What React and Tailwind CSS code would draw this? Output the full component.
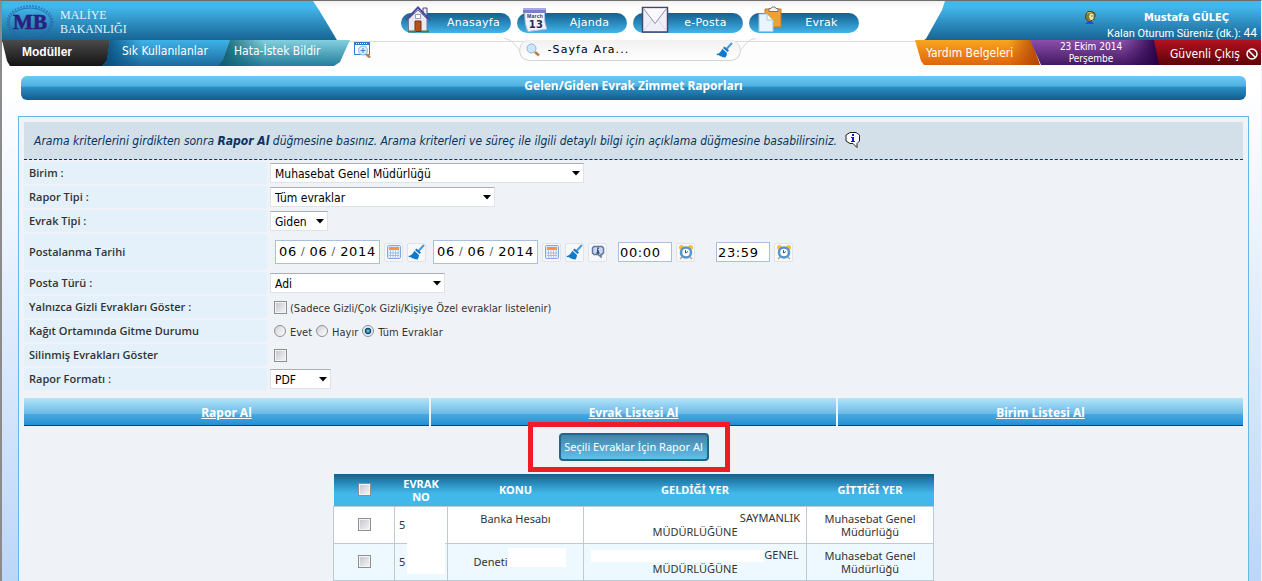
import clsx from 'clsx';

const menuItems = [
  { label: 'Anasayfa', icon: <HomeIcon /> },
  { label: 'Ajanda', icon: <AgendaIcon /> },
  { label: 'e-Posta', icon: <MailIcon /> },
  { label: 'Evrak', icon: <ClipboardIcon /> },
];

const actions = ['Rapor Al', 'Evrak Listesi Al', 'Birim Listesi Al'];

const tahoma = "font-['DejaVu_Sans_Condensed','DejaVu_Sans',sans-serif]";
const noto = "font-['Noto_Sans',sans-serif]";
const openSans = "font-['Open_Sans',sans-serif]";
const verdana = "font-['DejaVu_Sans',sans-serif]";

export default function App() {
  return (
    <div className={clsx('min-h-screen border-t border-r border-l-2 border-[#6f6c6c] border-r-[#f0f2f5] border-l-[#8b8b8b] bg-linear-to-b from-white from-15% to-[#bcd6f8] text-[#333]', noto)}>
      <Header />
      <SubHeader />
      <main className="ml-4 mr-3">
        <h1 className="mx-[3px] mt-2 flex h-6 items-start justify-center rounded-md bg-[linear-gradient(#6cc9f3,#4fb0e0_42%,#2a90c6_46%,#125c8c)] pt-0.5 text-xs leading-4 font-bold text-white">
          Gelen/Giden Evrak Zimmet Raporları
        </h1>
        <section className="mt-4 border border-[#62b8ea] bg-[#eff3f8] p-[5px] pb-0">
          <p className={clsx('mb-0.5 flex h-[38px] items-center gap-2 border-b border-dashed border-[#0a3460] bg-[#d4e0e9] px-2.5 text-xs text-[#083363]', tahoma)}>
            <em>
              Arama kriterlerini girdikten sonra <b>Rapor Al</b> düğmesine basınız. Arama kriterleri ve süreç ile ilgili detaylı bilgi için açıklama düğmesine basabilirsiniz.
            </em>
            <button type="button" aria-label="Açıklama"><InfoBubble /></button>
          </p>
          <ReportForm />
          <div className="mt-2 grid grid-cols-3 gap-0.5">
            {actions.map((action) => (
              <a key={action} href="#" className="flex h-7 items-center justify-center border-b border-[#0f4468] bg-[linear-gradient(#b4e5fa,#6bb9e6_58%,#4aa8df_60%,#2390d2)] pt-0.5 text-xs font-bold text-white underline">
                {action}
              </a>
            ))}
          </div>
          <div className="relative flex justify-center pt-[7px] pb-[13px]">
            <div className="absolute -top-1 left-1/2 -ml-[106px] h-[50px] w-[202px] border-[5px] border-[#ee1c24]" />
            <button type="button" className="relative flex h-7 w-[150px] items-center justify-center rounded-sm border-2 border-[#24658a] bg-linear-to-b from-[#4484a9] to-[#62bfea] text-[11px] whitespace-nowrap text-white">
              Seçili Evraklar İçin Rapor Al
            </button>
          </div>
          <Documents />
        </section>
      </main>
    </div>
  );
}

function Header() {
  return (
    <header className="grid h-[38px] grid-cols-[336px_1fr_340px] bg-linear-to-b from-[#f1f1f1] to-white to-20%">
      <div className="flex items-center gap-1.5 bg-linear-to-b from-[#43b6ea] from-15% to-[#14608f] pl-1 text-[#e3f1fb] [clip-path:polygon(0_0,311px_0,317px_9px,332px_34px,336px_100%,0_100%)]">
        <Logo />
        <div className="font-['Liberation_Serif',serif] text-xs leading-3.5">
          MALİYE<br />BAKANLIĞI
        </div>
      </div>
      <nav className="flex items-start justify-center gap-1.5 border-b border-[#dcdcdc] pt-3">
        {menuItems.map((item) => (
          <a key={item.label} href="#" className={clsx('relative flex h-5 w-[110px] items-center justify-center rounded-full bg-linear-to-b from-[#14608f] to-[#41b5ea] pl-9 text-[11px] tracking-wide text-white', verdana)}>
            <span className="absolute bottom-0 left-1">{item.icon}</span>
            {item.label}
          </a>
        ))}
      </nav>
      <div className={clsx('flex items-start justify-end bg-linear-to-b from-[#43b6ea] from-15% to-[#14608f] pr-1 text-white [clip-path:polygon(24px_0,100%_0,100%_100%,0_100%,5px_92%,21px_9px)]', tahoma)}>
        <div className="flex flex-col items-end">
          <div className="flex h-6 items-end gap-12 pr-7">
            <UserIcon />
            <b className="text-[11px] leading-3.5">Mustafa GÜLEÇ</b>
          </div>
          <div className="font-['Roboto',sans-serif] text-[11px] leading-4">
            Kalan Oturum Süreniz (dk.): <span className="text-xs">44</span>
          </div>
        </div>
      </div>
    </header>
  );
}

function SubHeader() {
  return (
    <div className={clsx('grid h-[29px] grid-cols-[336px_1fr_340px] items-start bg-[#fdfdfd] pt-px text-white', tahoma)}>
      <div className="flex">
        <a href="#" className="h-[26px] w-[108px] shrink-0 bg-linear-to-b from-[#4b4b4b] to-[#151515] pl-5 font-['Liberation_Sans',sans-serif] text-xs leading-6 font-bold [clip-path:polygon(0_0,100%_0,100%_100%,8px_100%,5px_21px)]">
          Modüller
        </a>
        <a href="#" className="-ml-2 h-[26px] w-[132px] shrink-0 bg-[linear-gradient(90deg,#064b7a,transparent_30%),linear-gradient(#3eb3e9,#1b6a9c)] pl-5 text-xs leading-[22px] [clip-path:polygon(8px_0,100%_0,120px_100%,0_100%,5px_20px)]">
          Sık Kullanılanlar
        </a>
        <a href="#" className="-ml-4 h-[26px] w-[132px] shrink-0 bg-[linear-gradient(90deg,#0d5c6d,transparent_35%),linear-gradient(#83d0de,#237d9b)] pl-4 text-xs leading-[22px] [clip-path:polygon(12px_0,100%_0,122px_22px,116px_100%,0_100%,5px_20px)]">
          Hata-İstek Bildir
        </a>
        <button type="button" aria-label="Sayfa önizleme" className="mt-0.5 ml-1 shrink-0 self-start"><PreviewIcon /></button>
      </div>
      <form className="relative mx-auto flex h-[21px] w-[222px] items-center gap-1 rounded-full border border-t-0 border-[#d4d4d4] bg-linear-to-b from-[#f1f1f1] to-white px-1.5">
        <svg className="absolute -top-0.5 -left-4" width="22" height="14" viewBox="0 0 22 14"><path d="M0 .5C8 1 12 8 16 13" fill="none" stroke="#d8d8d8" /></svg>
        <svg className="absolute -top-0.5 -right-4 -scale-x-100" width="22" height="14" viewBox="0 0 22 14"><path d="M0 .5C8 1 12 8 16 13" fill="none" stroke="#d8d8d8" /></svg>
        <SearchIcon />
        <input aria-label="Sayfa ara" defaultValue="-Sayfa Ara..." className={clsx('w-[168px] bg-transparent pl-1 text-[11px] tracking-widest text-black outline-none', verdana)} />
        <button type="button" aria-label="Temizle"><BroomIcon /></button>
      </form>
      <div className="flex justify-end">
        <a href="#" className="-mr-2.5 h-[25px] w-[125px] shrink-0 bg-[linear-gradient(270deg,#b04404,transparent_25%),linear-gradient(#f9a51d,#df650d)] pl-[11px] text-xs leading-[26px] [clip-path:polygon(0_0,116px_0,100%_100%,9px_100%,6px_21px)]">
          Yardım Belgeleri
        </a>
        <div className="-mr-1.5 h-[25px] w-[130px] shrink-0 bg-[linear-gradient(270deg,#240045,transparent_28%),linear-gradient(#8c4fab,#431862)] pt-px pr-2 text-center text-[10px] leading-3 [clip-path:polygon(0_0,125px_0,100%_100%,11px_100%)]">
          23 Ekim 2014<br />Perşembe
        </div>
        <a href="#" className="flex h-[25px] w-[107px] shrink-0 items-center gap-1.5 bg-linear-to-b from-[#b51220] to-[#5c0408] pt-0.5 pl-4 text-xs [clip-path:polygon(0_0,100%_0,100%_100%,5px_100%)]">
          Güvenli Çıkış
          <NoEntryIcon />
        </a>
      </div>
    </div>
  );
}

function ReportForm() {
  return (
    <form className="space-y-0.5 text-[11px]">
      <Row label="Birim :" htmlFor="birim">
        <Select id="birim" value="Muhasebat Genel Müdürlüğü" className="w-[314px]" />
      </Row>
      <Row label="Rapor Tipi :" htmlFor="raporTipi">
        <Select id="raporTipi" value="Tüm evraklar" className="w-[225px]" />
      </Row>
      <Row label="Evrak Tipi :" htmlFor="evrakTipi">
        <Select id="evrakTipi" value="Giden" className="w-[58px]" />
      </Row>
      <Row label="Postalanma Tarihi" htmlFor="gun1" tall>
        <div className="flex items-center pl-[5px]">
          <DateField prefix="1" />
          <Tool label="Takvim"><CalendarIcon /></Tool>
          <Tool label="Temizle"><BroomIcon /></Tool>
          <span className="w-[7px]" />
          <DateField prefix="2" />
          <Tool label="Takvim"><CalendarIcon /></Tool>
          <Tool label="Temizle"><BroomIcon /></Tool>
          <Tool label="Bilgi"><BadgeIcon /></Tool>
          <span className="w-[11px]" />
          <TimeField label="Başlangıç saati" value="00:00" />
          <Tool label="Saat"><ClockIcon /></Tool>
          <span className="w-[21px]" />
          <TimeField label="Bitiş saati" value="23:59" />
          <Tool label="Saat"><ClockIcon /></Tool>
        </div>
      </Row>
      <Row label="Posta Türü :" htmlFor="postaTuru">
        <Select id="postaTuru" value="Adi" className="w-[175px]" />
      </Row>
      <Row label="Yalnızca Gizli Evrakları Göster :" htmlFor="gizli">
        <div className="flex items-center gap-[3px] pl-1">
          <Checkbox id="gizli" />
          <label htmlFor="gizli" className={clsx('pt-1', tahoma)}>(Sadece Gizli/Çok Gizli/Kişiye Özel evraklar listelenir)</label>
        </div>
      </Row>
      <Row label="Kağıt Ortamında Gitme Durumu">
        <div className={clsx('flex items-center gap-1 pl-1', tahoma)}>
          <Radio label="Evet" />
          <Radio label="Hayır" />
          <Radio label="Tüm Evraklar" checked />
        </div>
      </Row>
      <Row label="Silinmiş Evrakları Göster" htmlFor="silinmis">
        <div className="flex pl-1"><Checkbox id="silinmis" /></div>
      </Row>
      <Row label="Rapor Formatı :" htmlFor="format">
        <Select id="format" value="PDF" className="w-[61px]" />
      </Row>
    </form>
  );
}

function Row({ label, htmlFor, tall, children }) {
  const Label = htmlFor ? 'label' : 'span';
  return (
    <div className={clsx('flex items-center gap-[3px]', tall ? 'h-9' : 'h-[22px]')}>
      <Label htmlFor={htmlFor} className={clsx('flex h-full w-[243px] items-center bg-[#e4f1fb] pl-[5px] font-semibold', openSans)}>{label}</Label>
      {children}
    </div>
  );
}

function Select({ id, value, className }) {
  return (
    <div className={clsx('relative h-5', className)}>
      <select id={id} defaultValue={value} className={clsx('h-5 w-full appearance-none border border-[#dfe2e8] border-t-[#aaadb3] bg-white pt-px pl-1 text-xs leading-4 text-black', tahoma)}>
        <option>{value}</option>
      </select>
      <svg className="pointer-events-none absolute top-2 right-1" width="8" height="5" viewBox="0 0 8 5"><path d="M0 0h8L4 4.5z" fill="#000" /></svg>
    </div>
  );
}

function DateField({ prefix }) {
  const input = 'bg-transparent text-center outline-none';
  return (
    <div className={clsx('flex h-6 w-[105px] items-center justify-between border border-[#a9bfdf] bg-white px-0.5 text-[13px] tracking-wider text-black', verdana)}>
      <input id={`gun${prefix}`} aria-label="Gün" defaultValue="06" className={clsx(input, 'w-5')} />
      <span className="text-[11px] text-[#555]">/</span>
      <input aria-label="Ay" defaultValue="06" className={clsx(input, 'w-5')} />
      <span className="text-[11px] text-[#555]">/</span>
      <input aria-label="Yıl" defaultValue="2014" className={clsx(input, 'w-[38px]')} />
    </div>
  );
}

function TimeField({ label, value }) {
  return (
    <input aria-label={label} defaultValue={value} className={clsx('h-5 w-[54px] border border-[#a9bfdf] bg-white pl-px text-[13px] tracking-wider text-black', verdana)} />
  );
}

function Tool({ label, children }) {
  return (
    <button type="button" aria-label={label} className="ml-1 flex size-[19px] items-center justify-center rounded-xs border border-[#e1e3e7] bg-[#f7f8fa]">
      {children}
    </button>
  );
}

function Checkbox(props) {
  return (
    <input type="checkbox" {...props} className="size-[13px] appearance-none border border-[#8e8f8f] bg-linear-to-br from-[#c3c5cb] to-[#f6f6f6] shadow-[inset_0_0_0_1px_#f4f4f4]" />
  );
}

function Radio({ label, checked }) {
  return (
    <label className="flex items-center gap-1">
      <input type="radio" name="gitme" defaultChecked={checked} className="size-3 appearance-none rounded-full border border-[#8e8f8f] not-checked:bg-linear-to-br not-checked:from-[#cfd2d6] not-checked:to-white checked:bg-[radial-gradient(circle_at_center,#5cc4ee_8%,#0b3a63_40%,#e8edf1_52%)]" />
      <span className="pt-1">{label}</span>
    </label>
  );
}

function Documents() {
  const cell = 'border border-[#bccbd3] px-1 py-0';
  return (
    <table className="mx-auto w-[600px] table-fixed border-collapse text-center text-[11px] leading-[13px]">
      <colgroup>
        <col className="w-[61px]" />
        <col className="w-[53px]" />
        <col className="w-[136px]" />
        <col className="w-[223px]" />
        <col className="w-[127px]" />
      </colgroup>
      <thead className="bg-[linear-gradient(#14608f,#42b7ea_60%)] text-white">
        <tr className="h-8">
          <th><div className="flex justify-center"><Checkbox aria-label="Tümünü seç" /></div></th>
          <th>EVRAK NO</th>
          <th>KONU</th>
          <th>GELDİĞİ YER</th>
          <th>GİTTİĞİ YER</th>
        </tr>
      </thead>
      <tbody>
        <tr className="h-[37px] bg-white">
          <td className={cell}><div className="flex justify-center"><Checkbox aria-label="Banka Hesabı" /></div></td>
          <td className={clsx(cell, 'text-left')}>5</td>
          <td className={cell}><div className="pb-3">Banka Hesabı</div></td>
          <td className={cell}><Blank className="h-3 w-[150px]" />SAYMANLIK<br />MÜDÜRLÜĞÜNE</td>
          <td className={cell}>Muhasebat Genel Müdürlüğü</td>
        </tr>
        <tr className="h-[37px] bg-[#edf9fe]">
          <td className={cell}><div className="flex justify-center"><Checkbox aria-label="Deneti" /></div></td>
          <td className={clsx(cell, 'relative text-left')}>
            5
            <span className="absolute -top-2 left-3 h-[38px] w-[38px] bg-white" />
          </td>
          <td className={cell}><div className="flex items-center justify-center pl-2">Deneti<Blank className="mb-2 h-[19px] w-[58px]" /></div></td>
          <td className={cell}><Blank className="h-3 w-[173px]" />GENEL<br />MÜDÜRLÜĞÜNE</td>
          <td className={cell}>Muhasebat Genel Müdürlüğü</td>
        </tr>
      </tbody>
    </table>
  );
}

function Blank({ className }) {
  return <span className={clsx('inline-block bg-white align-middle', className)} />;
}

function Logo() {
  return (
    <svg width="48" height="36" viewBox="0 0 48 36">
      <ellipse cx="24" cy="18" rx="21" ry="14" fill="none" stroke="#2a6fb4" strokeWidth="1" />
      <ellipse cx="24" cy="18" rx="22.500" ry="16" fill="none" stroke="#2b63a9" strokeWidth="2" strokeDasharray="1.500 1.500" opacity="0.8" />
      <text x="24" y="25" textAnchor="middle" fontFamily="Liberation Serif" fontWeight="bold" fontSize="21" fill="#291f7c" stroke="#291f7c" strokeWidth="0.600">MB</text>
    </svg>
  );
}

function HomeIcon() {
  return (
    <svg width="26" height="27" viewBox="0 0 26 27">
      <path d="M18 2h4v9h-4z" fill="#eef0fa" stroke="#454593" />
      <path d="M3.500 13L13 4l9 9v12.500h-18.500z" fill="#e9eaf4" stroke="#74749d" />
      <path d="M1 14L13 1.500 25 14" fill="none" stroke="#4b4d99" strokeWidth="2" />
      <path d="M10.500 8.500h5v4h-5z" fill="#fff" stroke="#999bb5" />
      <path d="M10 15h6v10.500h-6z" fill="#b6501f" stroke="#743212" />
      <path d="M3 25.500h8M16 25.500h8" stroke="#4d7d42" strokeWidth="2" />
    </svg>
  );
}

function AgendaIcon() {
  return (
    <svg width="26" height="27" viewBox="0 0 26 27">
      <path d="M4 4h20c-1 8-.5 14 2 19L7 25.500C4 19 3.500 12 4 4z" fill="#f2f3fb" stroke="#b9bedb" />
      <path d="M2 2h23v5H2z" fill="#7a80c5" />
      <path d="M2 2h23v2H2z" fill="#a6aadd" />
      <text x="14" y="12" textAnchor="middle" fontFamily="Liberation Sans" fontWeight="bold" fontSize="5" fill="#333763">March</text>
      <text x="15" y="22" textAnchor="middle" fontFamily="DejaVu Sans" fontWeight="bold" fontSize="10" fill="#262a59">13</text>
    </svg>
  );
}

function MailIcon() {
  return (
    <svg width="32" height="27" viewBox="0 0 32 27">
      <path d="M5.500 1.500h25v24.500h-25z" fill="#eff0f7" stroke="#474568" strokeWidth="1.500" />
      <path d="M6.500 25l9-12M29.500 25l-9-12" stroke="#d8d9e6" />
      <path d="M6.500 2.500l11.500 15L29.500 2.500" fill="#fafafe" stroke="#8d8fae" />
    </svg>
  );
}

function ClipboardIcon() {
  return (
    <svg width="32" height="27" viewBox="0 0 32 27">
      <path d="M12 3h16v18H12z" fill="#eda136" stroke="#c87b1b" />
      <path d="M16 2.500h2l1-1.500h3l1 1.500h2v3h-9z" fill="#f2f2f2" stroke="#777" />
      <path d="M6 8h8l6 6v11.500H6z" fill="#eaf4fc" stroke="#aac6df" />
      <path d="M14 8v6h6z" fill="#fff" stroke="#aac6df" />
    </svg>
  );
}

function UserIcon() {
  return (
    <svg width="12" height="15" viewBox="0 0 12 15">
      <path d="M2 4l2-2.500h4l3 2v3l-1 1v2H8l-1 2H4L1.500 8z" fill="#8a7c2c" stroke="#4a4420" />
      <path d="M6 4h3.500v5L8 10H6.500L5 7z" fill="#efe6b0" />
      <path d="M3 3.500l3-1 2 1" stroke="#d4c778" fill="none" />
      <path d="M8 5.500v1" stroke="#222" />
      <path d="M1 14l3-2.500h4L10 14z" fill="#1b52dc" />
    </svg>
  );
}

function PreviewIcon() {
  return (
    <svg width="17" height="16" viewBox="0 0 17 16">
      <path d="M.5.500h15v12H.5z" fill="#fff" stroke="#2b79d3" />
      <path d="M0 0h16v3H0z" fill="#2b79d3" />
      <path d="M2 1.500h12" stroke="#fff" strokeDasharray="1 1" />
      <path d="M12 12l4 3.500" stroke="#bd8450" strokeWidth="2.500" />
      <circle cx="9" cy="8.500" r="4.500" fill="#d9ebfb" stroke="#88b5e0" />
      <path d="M9 6v5M6.500 8.500h5" stroke="#4382cc" />
    </svg>
  );
}

function SearchIcon() {
  return (
    <svg width="14" height="14" viewBox="0 0 14 14">
      <path d="M9 9l4 3.500" stroke="#b97d4a" strokeWidth="2.500" />
      <circle cx="5.500" cy="5.500" r="4.500" fill="#cde5f9" stroke="#8eb6dc" />
    </svg>
  );
}

function BroomIcon() {
  return (
    <svg width="17" height="16" viewBox="0 0 17 16">
      <path d="M16 1l-5.500 6" stroke="#4a9ad6" strokeWidth="2" />
      <path d="M8.500 4.500l4.500 4-1.500 1.500L7 6z" fill="#1878c8" />
      <path d="M6.300 6.700l4.700 4.300c0 1.500-.5 3-1.500 4.500L6 15l-1-1-1 .5L3 13l-2 .3L.5 12C3.500 11.500 5 9.500 6.300 6.700z" fill="#0f7acb" />
    </svg>
  );
}

function CalendarIcon() {
  return (
    <svg width="14" height="14" viewBox="0 0 14 14">
      <rect x=".5" y=".5" width="13" height="13" rx="1" fill="#d9e8fb" stroke="#7fa7dd" />
      <path d="M2 2h10v3H2z" fill="#f6914a" />
      <path d="M2 5.500h10V12H2z" fill="#fff" />
      <path d="M3.500 5.500V12M6 5.500V12M8.500 5.500V12M11 5.500V12M2 8h10M2 10.500h10" stroke="#9dbbe6" />
    </svg>
  );
}

function BadgeIcon() {
  return (
    <svg width="14" height="14" viewBox="0 0 14 14">
      <path d="M3 1.500h8l1.500 1.500v5L11 9.500H10V12L7 9.500H3L1.500 8V3z" fill="#c9d8ee" stroke="#5f779e" strokeWidth="1.500" />
      <path d="M7 2.500v1.500M7 5v3M5.500 8h3M6 5h1" stroke="#253c66" strokeWidth="1.500" />
    </svg>
  );
}

function ClockIcon() {
  return (
    <svg width="16" height="16" viewBox="0 0 16 16">
      <circle cx="3.500" cy="3.500" r="2.500" fill="#efbd42" />
      <circle cx="12.500" cy="3.500" r="2.500" fill="#efbd42" />
      <path d="M4 13l-2 2M12 13l2 2" stroke="#b0a58c" strokeWidth="1.500" />
      <circle cx="8" cy="8.500" r="5" fill="#fff" stroke="#5794cd" strokeWidth="2.500" />
      <path d="M7.500 6v3L10 7.500" fill="none" stroke="#555" />
    </svg>
  );
}

function InfoBubble() {
  return (
    <svg width="16" height="17" viewBox="0 0 16 17">
      <path d="M5 .5h6L14.500 3v6L12 11.500v4l-4-4H5L1 9V3z" fill="#fff" stroke="#222" />
      <path d="M7 2h2v2H7zM6 5h3v4h1v1H6V9h1V6H6z" fill="#1212ee" />
    </svg>
  );
}

function NoEntryIcon() {
  return (
    <svg width="12" height="12" viewBox="0 0 12 12">
      <circle cx="6" cy="6" r="5" fill="none" stroke="#fff" strokeWidth="1.500" />
      <path d="M2.500 2.500l7 7" stroke="#fff" strokeWidth="1.500" />
    </svg>
  );
}
